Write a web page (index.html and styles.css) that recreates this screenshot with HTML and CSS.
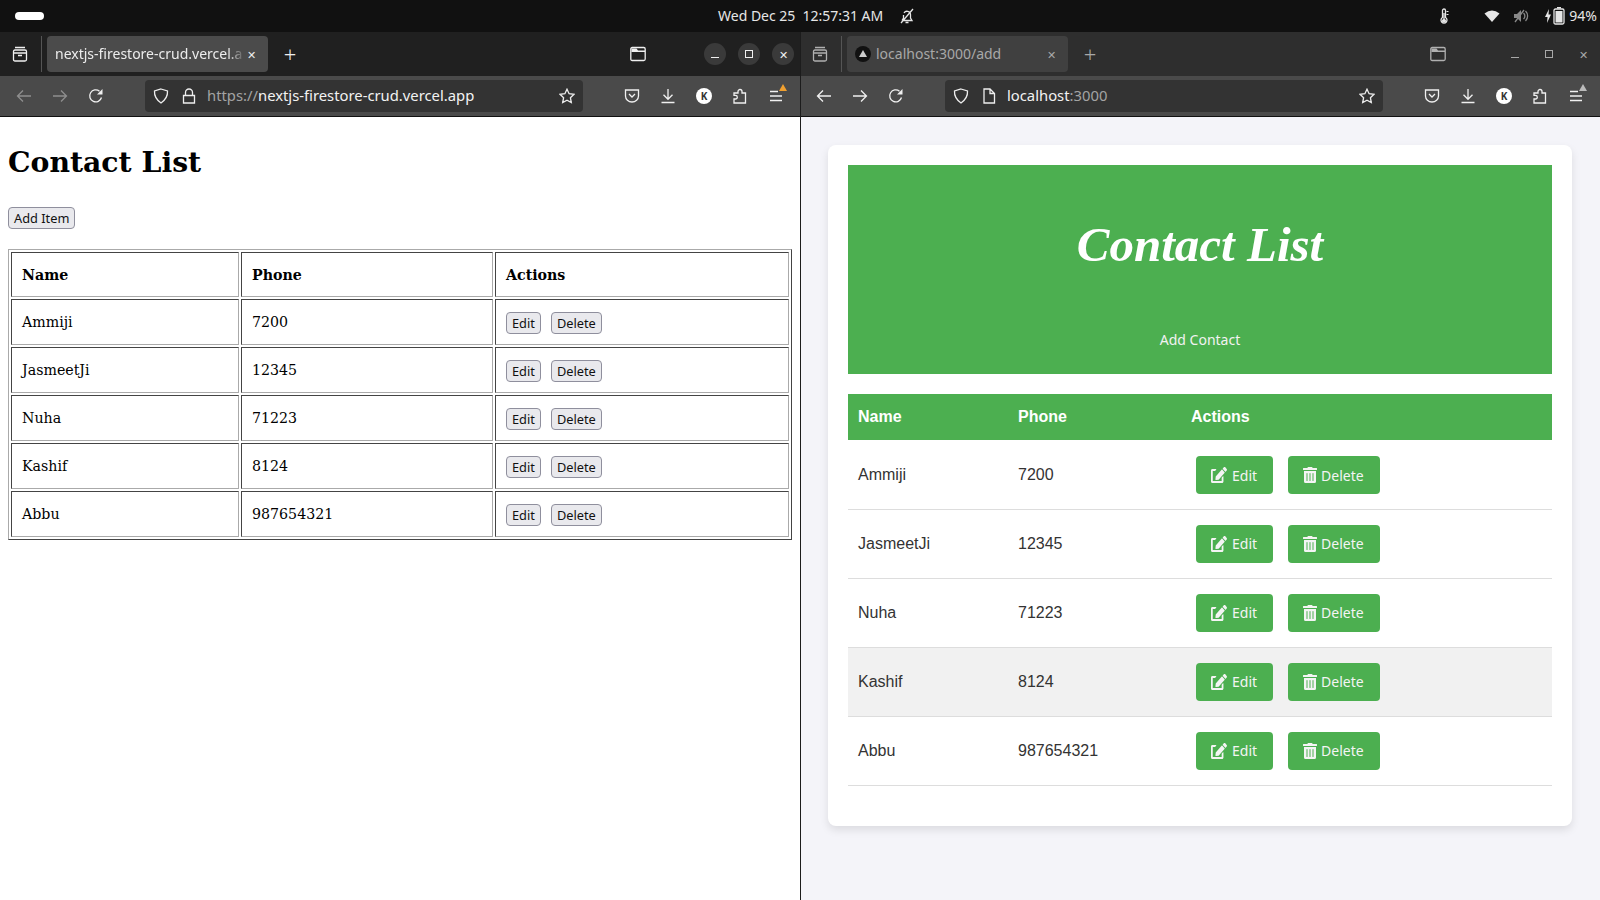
FILE: index.html
```html
<!DOCTYPE html>
<html lang="en">
<head>
<meta charset="UTF-8">
<title>Contact List</title>
<link rel="stylesheet" href="styles.css">
</head>
<body>

<svg class="sprite" width="0" height="0">
    <symbol id="i-tabs" viewBox="0 0 16 16"><path d="M3 1.500h10M1.500 5.500q0-1.500 1.500-1.500h10q1.500 0 1.500 1.500v8q0 1.500-1.500 1.500H3q-1.500 0-1.500-1.500zM1.500 7h13M6 9.500h4"/></symbol>
    <symbol id="i-back" viewBox="0 0 16 16"><path d="M15 8H1.500M7 2.500 1.500 8 7 13.500"/></symbol>
    <symbol id="i-forward" viewBox="0 0 16 16"><path d="M1 8h13.500M9 2.500 14.500 8 9 13.500"/></symbol>
    <symbol id="i-reload" viewBox="0 0 16 16"><path d="M13.500 9.500A6 6 0 1 1 11.500 3.200"/><path class="solid" d="M14.500 1v5.500H9z"/></symbol>
    <symbol id="i-shield" viewBox="0 0 16 16"><path d="M8 1 14.500 3q.5 7-6.500 12Q1 10 1.500 3z"/></symbol>
    <symbol id="i-lock" viewBox="0 0 16 16"><path d="M2.500 7.500h11v7.500h-11zM4.500 7.500V4.500a3.500 3.500 0 0 1 7 0v3"/></symbol>
    <symbol id="i-page" viewBox="0 0 16 16"><path d="M3 1h6l4.500 4.500V15H3zM9 1v4.500h4.500"/></symbol>
    <symbol id="i-star" viewBox="0 0 16 16"><path d="M8 1.200 10.100 5.700 15 6.300 11.400 9.700 12.300 14.600 8 12.200 3.700 14.600 4.600 9.700 1 6.300 5.900 5.700z"/></symbol>
    <symbol id="i-pocket" viewBox="0 0 16 16"><path d="M1.500 2h13v6a6.500 6 0 0 1-13 0zM5 6l3 3 3-3"/></symbol>
    <symbol id="i-download" viewBox="0 0 16 16"><path d="M8 1v10M3.500 6.800 8 11.300l4.500-4.500M1.500 14.500h13"/></symbol>
    <symbol id="i-puzzle" viewBox="0 0 16 16"><path d="M2 15V11h1.500a1.800 1.800 0 0 0 0-3.600H2V5h4V3.500a2 2 0 0 1 4 0V5h3.500v10z"/></symbol>
    <symbol id="i-menu" viewBox="0 0 16 16"><path d="M2 3.500h8M2 8h12M2 12.500h12"/></symbol>
    <symbol id="i-folder" viewBox="0 0 16 16"><path d="M.8 3q0-1.500 1.500-1.500h11.400q1.500 0 1.500 1.500v10q0 1.500-1.500 1.500H2.300q-1.500 0-1.500-1.500z"/><path class="solid" d="M1.500 2.500h5l1.500 2h7V6h-13.500z"/></symbol>
    <symbol id="i-edit" viewBox="0 0 576 512" preserveAspectRatio="none"><path class="solid" d="M402.600 83.200l90.200 90.200c3.800 3.800 3.800 10 0 13.800L274.400 405.600l-92.800 10.300c-12.400 1.400-22.900-9.100-21.500-21.500l10.300-92.800L388.800 83.200c3.800-3.800 10-3.800 13.800 0zm162-22.900l-48.800-48.800c-15.200-15.200-39.900-15.200-55.200 0l-35.400 35.400c-3.800 3.800-3.800 10 0 13.800l90.200 90.200c3.800 3.800 10 3.800 13.800 0l35.400-35.400c15.200-15.300 15.200-40 0-55.200zM384 346.200V448H64V128h73.100c3.200 0 6.200-1.300 8.500-3.500l40-40c7.600-7.600 2.200-20.500-8.500-20.500H48C21.500 64 0 85.500 0 112v352c0 26.500 21.500 48 48 48h352c26.500 0 48-21.500 48-48V306.200c0-10.700-12.900-16-20.500-8.500l-40 40c-2.200 2.300-3.500 5.300-3.500 8.500z"/></symbol>
    <symbol id="i-trash" viewBox="0 0 448 512" preserveAspectRatio="none"><path class="solid" d="M32 464a48 48 0 0 0 48 48h288a48 48 0 0 0 48-48V128H32zm272-256a16 16 0 0 1 32 0v224a16 16 0 0 1-32 0zm-96 0a16 16 0 0 1 32 0v224a16 16 0 0 1-32 0zm-96 0a16 16 0 0 1 32 0v224a16 16 0 0 1-32 0zM432 32H312l-9.400-18.700A24 24 0 0 0 281.100 0H166.800a23.720 23.720 0 0 0-21.400 13.300L136 32H16A16 16 0 0 0 0 48v32a16 16 0 0 0 16 16h416a16 16 0 0 0 16-16V48a16 16 0 0 0-16-16z"/></symbol>
</svg>

<div class="topbar">
    <span class="pill"></span>
    <span class="clock">Wed Dec 25</span>
    <span class="clock time">12:57:31 AM</span>
    <svg class="tray bell" viewBox="0 0 16 16"><path d="M3 12.500h10L11.500 10V6.500A3.500 3.500 0 0 0 5 5M4.500 7v3L3 12.500M6.500 14.500h3M2 15 14 1"/></svg>
    <svg class="tray thermo" viewBox="0 0 16 16"><path d="M6.500 2.500a1.500 1.500 0 0 1 3 0v7a3 3 0 1 1-3 0z"/><path class="solid" d="M7.300 5h1.400v6a2 2 0 1 1-1.400 0zM10.500 3h2v1h-2zM10.500 6h2v1h-2z"/></svg>
    <svg class="tray wifi" viewBox="0 0 16 16"><path class="solid" d="M.5 5.500Q8-.5 15.500 5.500L8 14z"/></svg>
    <svg class="tray speaker" viewBox="0 0 16 16"><path class="solid dim" d="M1 6h3l4-4v12l-4-4H1z"/><path class="dimline" d="M10.500 5a4 4 0 0 1 0 6M12.500 3a7 7 0 0 1 0 10M2 14 11 2"/></svg>
    <svg class="tray charge" viewBox="0 0 8 16"><path class="solid" d="M5 1 1 9h2.500L3 15l4-8.500H4.500z"/></svg>
    <svg class="tray battery" viewBox="0 0 12 18"><path class="solid" d="M4 0h4v1.500H4z"/><path d="M2.500 2h7q1.500 0 1.500 1.500v12q0 1.500-1.500 1.500h-7Q1 17 1 15.500v-12Q1 2 2.500 2z"/><path class="solid" d="M2.500 4h7v11.500h-7z"/></svg>
    <span class="clock percent">94%</span>
</div>

<div class="windows">

    <div class="window focused">
        <div class="tabbar">
            <span class="icon tablist"><svg><use href="#i-tabs"/></svg></span>
            <div class="tab">
                <span class="tab-title">nextjs-firestore-crud.vercel.a</span>
                <span class="tab-close">&#x2715;</span>
            </div>
            <span class="newtab">+</span>
            <span class="icon folder"><svg><use href="#i-folder"/></svg></span>
            <div class="controls">
                <span class="ctl"><i class="min"></i></span>
                <span class="ctl"><i class="max"></i></span>
                <span class="ctl close">&#x2715;</span>
            </div>
        </div>
        <div class="toolbar">
            <span class="icon off"><svg><use href="#i-back"/></svg></span>
            <span class="icon off"><svg><use href="#i-forward"/></svg></span>
            <span class="icon"><svg><use href="#i-reload"/></svg></span>
            <div class="urlbar">
                <span class="url-icon"><svg><use href="#i-shield"/></svg></span>
                <span class="url-icon"><svg><use href="#i-lock"/></svg></span>
                <span class="url"><span class="dimmed">https://</span>nextjs-firestore-crud.vercel.app</span>
                <span class="url-icon"><svg><use href="#i-star"/></svg></span>
            </div>
            <span class="icon"><svg><use href="#i-pocket"/></svg></span>
            <span class="icon"><svg><use href="#i-download"/></svg></span>
            <span class="icon"><span class="avatar">K</span></span>
            <span class="icon"><svg><use href="#i-puzzle"/></svg></span>
            <span class="icon menu"><svg><use href="#i-menu"/></svg><i class="badge orange"></i></span>
        </div>
        <div class="page plain">
            <h1>Contact List</h1>
            <button class="plain-btn">Add Item</button>
            <table class="plain-table">
                <tr><th class="c1">Name</th><th class="c2">Phone</th><th>Actions</th></tr>
                <tr><td>Ammiji</td><td>7200</td><td><button class="plain-btn">Edit</button><button class="plain-btn">Delete</button></td></tr>
                <tr><td>JasmeetJi</td><td>12345</td><td><button class="plain-btn">Edit</button><button class="plain-btn">Delete</button></td></tr>
                <tr><td>Nuha</td><td>71223</td><td><button class="plain-btn">Edit</button><button class="plain-btn">Delete</button></td></tr>
                <tr><td>Kashif</td><td>8124</td><td><button class="plain-btn">Edit</button><button class="plain-btn">Delete</button></td></tr>
                <tr><td>Abbu</td><td>987654321</td><td><button class="plain-btn">Edit</button><button class="plain-btn">Delete</button></td></tr>
            </table>
        </div>
    </div>

    <div class="window blurred">
        <div class="tabbar">
            <span class="icon tablist"><svg><use href="#i-tabs"/></svg></span>
            <div class="tab">
                <span class="favicon"></span>
                <span class="tab-title">localhost:3000/add</span>
                <span class="tab-close">&#x2715;</span>
            </div>
            <span class="newtab">+</span>
            <span class="icon folder"><svg><use href="#i-folder"/></svg></span>
            <div class="controls">
                <span class="ctl"><i class="min"></i></span>
                <span class="ctl"><i class="max"></i></span>
                <span class="ctl close">&#x2715;</span>
            </div>
        </div>
        <div class="toolbar">
            <span class="icon"><svg><use href="#i-back"/></svg></span>
            <span class="icon"><svg><use href="#i-forward"/></svg></span>
            <span class="icon"><svg><use href="#i-reload"/></svg></span>
            <div class="urlbar">
                <span class="url-icon"><svg><use href="#i-shield"/></svg></span>
                <span class="url-icon"><svg><use href="#i-page"/></svg></span>
                <span class="url">localhost<span class="dimmed">:3000</span></span>
                <span class="url-icon"><svg><use href="#i-star"/></svg></span>
            </div>
            <span class="icon"><svg><use href="#i-pocket"/></svg></span>
            <span class="icon"><svg><use href="#i-download"/></svg></span>
            <span class="icon"><span class="avatar">K</span></span>
            <span class="icon"><svg><use href="#i-puzzle"/></svg></span>
            <span class="icon menu"><svg><use href="#i-menu"/></svg><i class="badge"></i></span>
        </div>
        <div class="page styled">
            <div class="card">
                <div class="banner">
                    <h1>Contact List</h1>
                    <a class="add-link">Add Contact</a>
                </div>
                <table class="contact-table">
                    <thead>
                        <tr><th class="col-name">Name</th><th class="col-phone">Phone</th><th>Actions</th></tr>
                    </thead>
                    <tbody>
                        <tr><td>Ammiji</td><td>7200</td><td><a class="btn"><svg><use href="#i-edit"/></svg>Edit</a><a class="btn"><svg class="trash"><use href="#i-trash"/></svg>Delete</a></td></tr>
                        <tr><td>JasmeetJi</td><td>12345</td><td><a class="btn"><svg><use href="#i-edit"/></svg>Edit</a><a class="btn"><svg class="trash"><use href="#i-trash"/></svg>Delete</a></td></tr>
                        <tr><td>Nuha</td><td>71223</td><td><a class="btn"><svg><use href="#i-edit"/></svg>Edit</a><a class="btn"><svg class="trash"><use href="#i-trash"/></svg>Delete</a></td></tr>
                        <tr class="hovered"><td>Kashif</td><td>8124</td><td><a class="btn"><svg><use href="#i-edit"/></svg>Edit</a><a class="btn"><svg class="trash"><use href="#i-trash"/></svg>Delete</a></td></tr>
                        <tr><td>Abbu</td><td>987654321</td><td><a class="btn"><svg><use href="#i-edit"/></svg>Edit</a><a class="btn"><svg class="trash"><use href="#i-trash"/></svg>Delete</a></td></tr>
                    </tbody>
                </table>
            </div>
        </div>
    </div>

</div>

</body>
</html>
```

FILE: styles.css
```css
* {
    box-sizing: border-box;
}
html, body {
    margin: 0;
    height: 900px;
    overflow: hidden;
}
body {
    display: flex;
    flex-direction: column;
    font-family: "Noto Sans", sans-serif;
    background: #111;
}
.sprite {
    display: block;
    position: absolute;
}
svg {
    fill: none;
    stroke: currentColor;
    stroke-width: 1.3;
}
.solid {
    fill: currentColor;
    stroke: none;
}

/* system bar */
.topbar {
    height: 32px;
    flex: none;
    display: flex;
    align-items: center;
    background: #111;
    color: #e6e6e6;
    font-size: 14px;
}
.pill {
    width: 29px;
    height: 8px;
    margin-left: 15px;
    border-radius: 4px;
    background: #fff;
}
.clock {
    padding-bottom: 2px;
    white-space: nowrap;
}
.clock:nth-child(2) {
    margin-left: 674px;
}
.time {
    margin-left: 7px;
}
.tray {
    flex: none;
    width: 16px;
    height: 16px;
}
.bell {
    margin-left: 16px;
}
.thermo {
    margin-left: 521px;
}
.wifi {
    margin-left: 32px;
}
.speaker {
    margin-left: 13px;
}
.dim {
    fill: #888;
}
.dimline {
    stroke: #888;
}
.charge {
    width: 8px;
    margin-left: 15px;
}
.battery {
    width: 12px;
    height: 18px;
    margin-left: 1px;
}
.percent {
    margin-left: 4px;
}

/* browser windows */
.windows {
    flex: 1;
    display: flex;
}
.window {
    width: 800px;
    display: flex;
    flex-direction: column;
}
.blurred {
    border-left: 1px solid #1c1c1c;
}
.tabbar {
    height: 44px;
    flex: none;
    display: flex;
    align-items: center;
    padding-right: 6px;
    background: #202020;
}
.blurred .tabbar {
    background: #2e2e2e;
    color: #a8a8a8;
}
.icon {
    position: relative;
    flex: none;
    width: 36px;
    height: 32px;
    display: flex;
    align-items: center;
    justify-content: center;
    color: #f0f0f0;
}
.icon svg {
    width: 16px;
    height: 16px;
}
.off {
    color: #8e8e8e;
}
.tablist {
    width: 42px;
    height: 36px;
    padding-right: 2px;
    border-right: 1px solid #555;
    margin-right: 5px;
}
.blurred .tablist {
    width: 41px;
    padding-right: 3px;
}
.blurred .tabbar .icon {
    color: #b0b0b0;
}
.tab {
    width: 221px;
    height: 36px;
    flex: none;
    display: flex;
    align-items: center;
    padding: 0 9px 0 8px;
    border-radius: 4px;
    background: #4b4b4b;
    color: #ececec;
    font-size: 14px;
}
.blurred .tab {
    background: #404040;
    color: #a8a8a8;
}
.tab-title {
    flex: 1;
    padding-bottom: 2px;
    white-space: nowrap;
    -webkit-mask-image: linear-gradient(to right, #000 90%, transparent 99%);
    mask-image: linear-gradient(to right, #000 90%, transparent 99%);
}
.blurred .tab-title {
    -webkit-mask-image: none;
    mask-image: none;
}
.tab-close {
    font-size: 11px;
    width: 12px;
}
.favicon {
    position: relative;
    flex: none;
    width: 16px;
    height: 16px;
    margin-right: 5px;
    border-radius: 50%;
    background: #111;
}
.favicon::after {
    content: "";
    position: absolute;
    left: 4px;
    top: 4px;
    border-left: 4px solid transparent;
    border-right: 4px solid transparent;
    border-bottom: 7px solid #ccc;
}
.newtab {
    width: 44px;
    flex: none;
    text-align: center;
    color: #eee;
    font-size: 22px;
    font-weight: 300;
    line-height: 1;
}
.blurred .newtab {
    color: #a8a8a8;
}
.folder {
    margin-left: auto;
}
.controls {
    display: flex;
    gap: 12px;
    margin-left: 48px;
}
.ctl {
    width: 22px;
    height: 22px;
    display: flex;
    align-items: center;
    justify-content: center;
    border-radius: 50%;
    background: #3a3a3a;
    color: #f0f0f0;
    font-size: 11px;
}
.blurred .ctl {
    background: none;
    color: #a8a8a8;
}
.min {
    width: 8px;
    height: 1px;
    margin-top: 7px;
    background: currentColor;
}
.max {
    width: 8px;
    height: 8px;
    border: 1px solid currentColor;
}
.toolbar {
    height: 41px;
    flex: none;
    display: flex;
    align-items: flex-start;
    padding: 4px 6px 0;
    background: #4a4a4a;
    border-bottom: 1px solid #111;
}
.blurred .toolbar {
    padding-left: 5px;
}
.urlbar {
    flex: 1;
    height: 32px;
    display: flex;
    align-items: center;
    margin: 0 31px;
    padding: 0 2px;
    border-radius: 4px;
    background: #333;
    color: #f2f2f2;
    font-size: 14.800px;
}
.url-icon {
    flex: none;
    width: 28px;
    height: 20px;
    display: flex;
    align-items: center;
    justify-content: center;
    color: #eee;
}
.url-icon svg {
    width: 16px;
    height: 16px;
}
.url {
    flex: 1;
    margin-left: 4px;
    padding-bottom: 2px;
    white-space: nowrap;
}
.dimmed {
    color: #a3a3a3;
}
.avatar {
    width: 16px;
    height: 16px;
    display: flex;
    align-items: center;
    justify-content: center;
    border-radius: 50%;
    background: #fff;
    color: #333;
    font-size: 10px;
    font-weight: 700;
}
.badge {
    position: absolute;
    top: 4px;
    right: 7px;
    border-left: 4px solid transparent;
    border-right: 4px solid transparent;
    border-bottom: 7px solid #bbb;
}
.badge.orange {
    border-bottom-color: #f0a030;
}

/* page areas */
.page {
    flex: 1;
    min-height: 0;
}
.plain {
    padding: 8px;
    background: #fff;
    color: #000;
    font-family: "DejaVu Serif", serif;
    font-size: 14.200px;
}
.plain h1 {
    margin: 15px 0 23px;
    font-size: 28.300px;
    line-height: 44px;
}
.plain-btn {
    display: inline-block;
    height: 22px;
    margin-right: 10px;
    padding: 0 5px;
    border: 1px solid #8f8f9d;
    border-radius: 4px;
    background: #e9e9ed;
    color: #111;
    font-family: "Noto Sans", sans-serif;
    font-size: 12.800px;
    vertical-align: middle;
}
.plain-table td .plain-btn {
    margin-top: 2px;
}
.plain-table {
    width: 784px;
    margin-top: 20px;
    table-layout: fixed;
    border-spacing: 2px;
    border: 1px solid;
    border-color: #aaa #444 #444 #aaa;
}
.plain-table th,
.plain-table td {
    height: 46px;
    padding: 0 10px;
    border: 1px solid;
    border-color: #444 #aaa #aaa #444;
    text-align: left;
}
.plain-table th {
    height: 45px;
}
.c1 {
    width: 228px;
}
.c2 {
    width: 252px;
}

.styled {
    padding: 28px 27px 0;
    background: #f4f4f9;
}
.card {
    width: 744px;
    height: 681px;
    padding: 20px;
    border-radius: 8px;
    background: #fff;
    box-shadow: 0 4px 8px rgba(0, 0, 0, 0.1);
}
.banner {
    height: 209px;
    padding-top: 45px;
    background: #4caf50;
    color: #fff;
    text-align: center;
}
.banner h1 {
    margin: 0 0 48px;
    font-family: "Liberation Serif", serif;
    font-style: italic;
    font-size: 49px;
    line-height: 70px;
}
.add-link {
    font-size: 14px;
    color: #f2f2f2;
}
.contact-table {
    width: 704px;
    margin-top: 20px;
    table-layout: fixed;
    border-collapse: collapse;
    font-family: "Liberation Sans", sans-serif;
    font-size: 16px;
    color: #333;
}
.contact-table th {
    height: 46px;
    padding: 0 10px;
    background: #4caf50;
    color: #fff;
    text-align: left;
}
.contact-table td {
    height: 69px;
    padding: 0 10px;
    border-bottom: 1px solid #ddd;
}
.contact-table tbody tr:first-child td {
    padding-top: 2px;
}
.col-name {
    width: 160px;
}
.col-phone {
    width: 173px;
}
.hovered td {
    background: #f1f1f1;
}
.btn {
    display: inline-flex;
    align-items: center;
    height: 38px;
    margin: 0 10px 0 5px;
    padding: 0 16px 0 15px;
    border-radius: 4px;
    background: #4caf50;
    color: #f4f4f4;
    font-family: "Noto Sans", sans-serif;
    font-size: 14px;
    vertical-align: middle;
}
.btn svg {
    width: 16px;
    height: 16px;
    margin-right: 5px;
}
.btn svg.trash {
    width: 14px;
    height: 16px;
    margin-right: 4px;
}
```
